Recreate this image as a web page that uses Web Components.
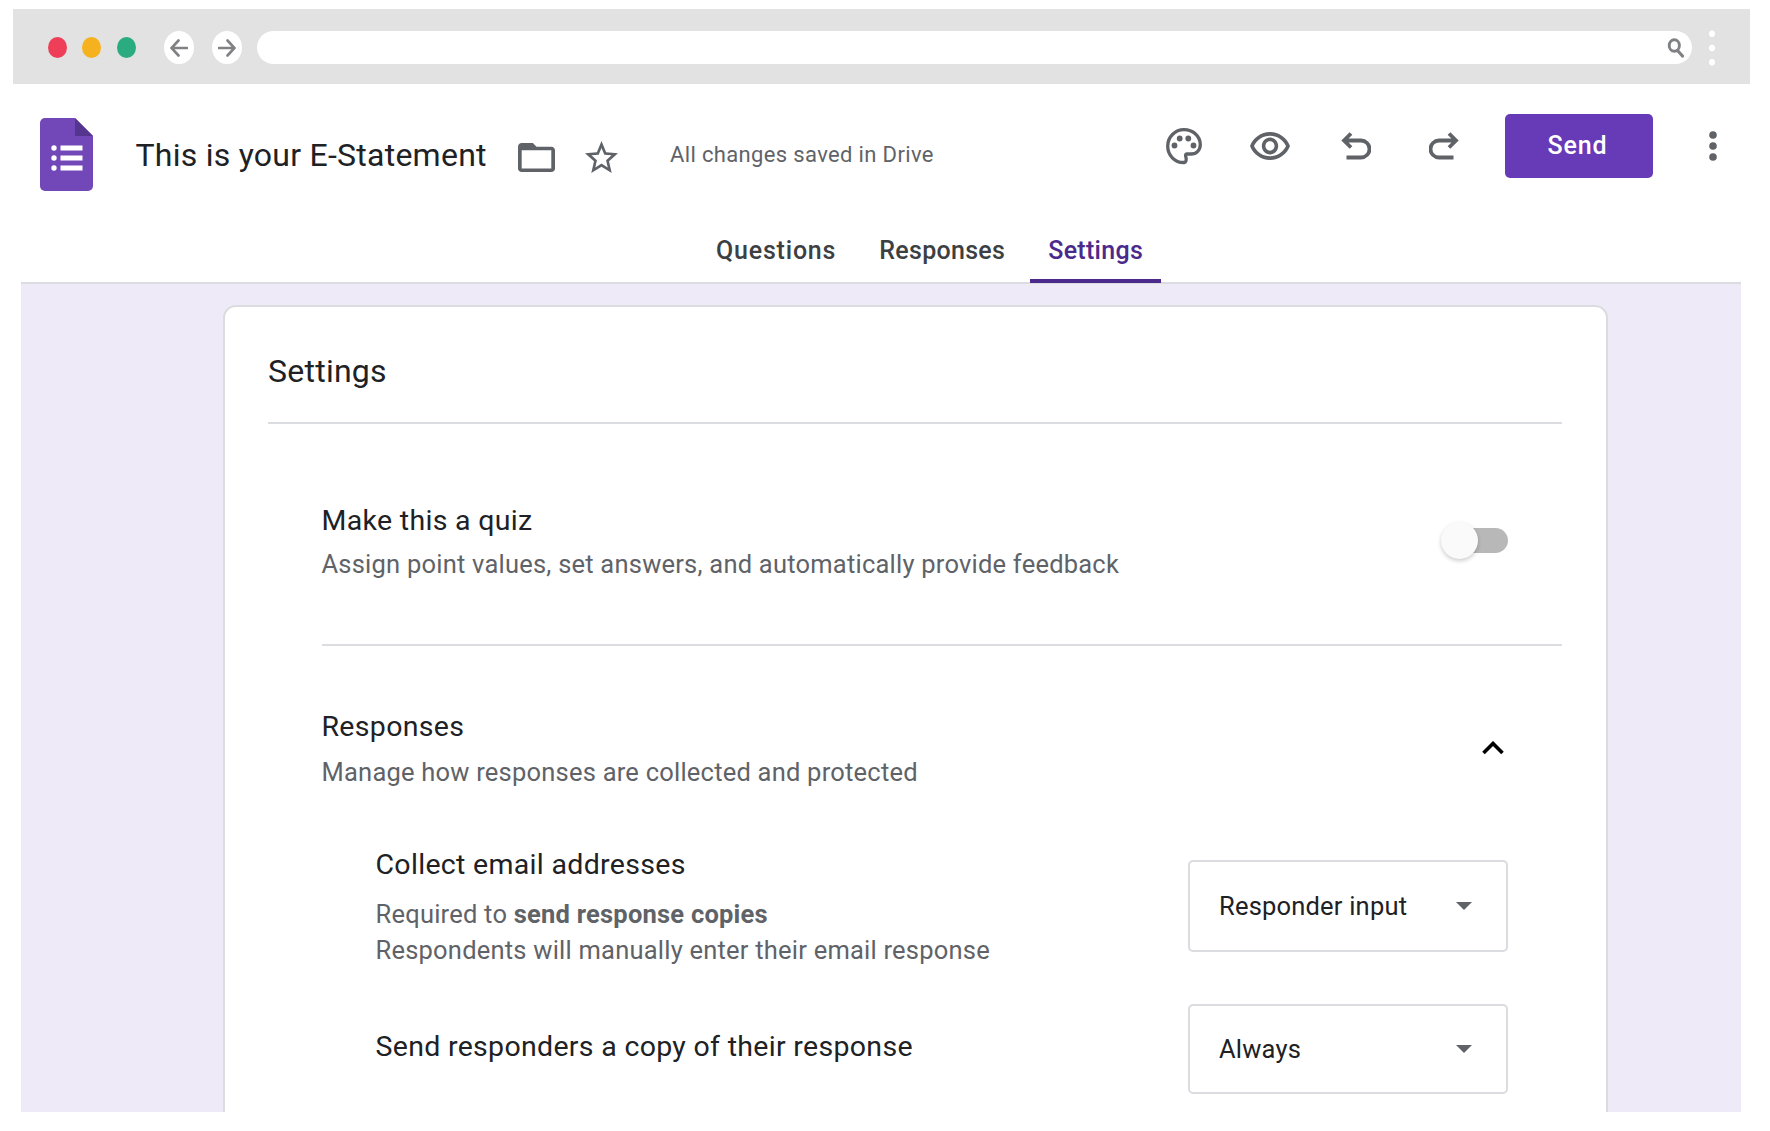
<!DOCTYPE html>
<html lang="en">
<head>
<meta charset="utf-8">
<title>This is your E-Statement</title>
<style>
  body {
    margin: 0;
    background: #fff;
    font-family: Roboto, "Liberation Sans", sans-serif;
    color: #202124;
  }
</style>
</head>
<body>
<form-editor></form-editor>

<script>
const icons = {
  back: { box: '0 0 18 18', path: '<path d="M17 9H2M8.500 1.500L1.500 9l7 7.500" fill="none" stroke="currentColor" stroke-width="2.600" stroke-linecap="round"/>' },
  forward: { box: '0 0 18 18', path: '<path d="M1 9h15M9.500 1.500l7 7.500-7 7.500" fill="none" stroke="currentColor" stroke-width="2.600" stroke-linecap="round"/>' },
  search: { box: '0 0 18 20', path: '<ellipse cx="7.300" cy="7.500" rx="5.100" ry="5.800" fill="none" stroke="currentColor" stroke-width="2.900"/><path d="M10.500 12.500l5 5.500" stroke="currentColor" stroke-width="3.200" stroke-linecap="round"/>' },
  dots: { box: '0 0 8 36', path: '<g fill="currentColor"><ellipse cx="4" cy="3.700" rx="3" ry="3.200"/><ellipse cx="4" cy="18" rx="3" ry="3.200"/><ellipse cx="4" cy="32.300" rx="3" ry="3.200"/></g>' },
  logo: { box: '0 0 53 73', path: '<path d="M5 0h30l18 18v50a5 5 0 0 1-5 5H5a5 5 0 0 1-5-5V5a5 5 0 0 1 5-5z" fill="#7248b9"/><path d="M35 0l18 18H35z" fill="#563590"/><g fill="#fff"><path d="M20.500 27.500h22v5h-22zM20.500 37.500h22v5h-22zM20.500 47.500h22v5h-22z"/><circle cx="14" cy="30" r="2.700"/><circle cx="14" cy="40" r="2.700"/><circle cx="14" cy="50" r="2.700"/></g>' },
  folder: { box: '2 4 20 16', path: '<path d="M20 6h-8l-2-2H4c-1.100 0-2 .9-2 2v12c0 1.100.9 2 2 2h16c1.100 0 2-.9 2-2V8c0-1.100-.9-2-2-2zm0 12H4V8h16v10z" fill="currentColor"/>' },
  star: { box: '2 2 20 19', path: '<path d="M22 9.240l-7.190-.62L12 2 9.190 8.630 2 9.240l5.460 4.730L5.820 21 12 17.270 18.180 21l-1.630-7.030L22 9.240zM12 15.400l-3.760 2.270 1-4.280-3.320-2.880 4.380-.38L12 6.100l1.710 4.040 4.380.38-3.320 2.880 1 4.280L12 15.400z" fill="currentColor"/>' },
  palette: { box: '0 0 36 37', path: '<path d="M18.500 34.500C8.500 35 1.700 27 1.700 18S9 1.700 18 1.700 34.300 8 34.300 16.500C34.300 22 30.500 26 25 26h-4c-1.800 0-1.500 2-1 3.500.8 3-.5 5-1.500 5z" fill="none" stroke="currentColor" stroke-width="3.300"/><g fill="currentColor"><circle cx="8.500" cy="17.500" r="2.900"/><circle cx="13.700" cy="10.500" r="2.900"/><circle cx="22.300" cy="10.500" r="2.900"/><circle cx="27.500" cy="17.500" r="2.900"/></g>' },
  eye: { box: '1 4 22 15', path: '<path d="M12 6c3.790 0 7.170 2.130 8.820 5.500C19.170 14.870 15.790 17 12 17s-7.170-2.130-8.820-5.500C4.830 8.130 8.210 6 12 6m0-2C7 4 2.730 7.110 1 11.500 2.730 15.890 7 19 12 19s9.270-3.110 11-7.500C21.270 7.110 17 4 12 4zm0 5c1.380 0 2.500 1.120 2.500 2.500S13.380 14 12 14s-2.500-1.120-2.500-2.500S10.620 9 12 9m0-2c-2.480 0-4.500 2.020-4.500 4.500S9.520 16 12 16s4.500-2.020 4.500-4.500S14.480 7 12 7z" fill="currentColor"/>' },
  undo: { box: '0 0 30 28', path: '<path d="M10 1.500L3 8.500l7 7M3 8.500h17a8.500 8.500 0 0 1 0 17H5.500" fill="none" stroke="currentColor" stroke-width="3.800"/>' },
  redo: { box: '0 0 30 28', path: '<path d="M20 1.500l7 7-7 7M27 8.500H10a8.500 8.500 0 0 0 0 17h14.500" fill="none" stroke="currentColor" stroke-width="3.800"/>' },
  more: { box: '0 0 8 30', path: '<g fill="currentColor"><circle cx="4" cy="4" r="3.800"/><circle cx="4" cy="15" r="3.800"/><circle cx="4" cy="26" r="3.800"/></g>' },
  chevron: { box: '0 0 22 14', path: '<path d="M1.500 12L11 2.500l9.500 9.500" fill="none" stroke="currentColor" stroke-width="3.600"/>' },
  arrow: { box: '0 0 16 8', path: '<path d="M0 0h16L8 8z" fill="currentColor"/>' },
};

class UiIcon extends HTMLElement {
  constructor() {
    super();
    this.attachShadow({ mode: 'open' });
  }

  connectedCallback() {
    const icon = icons[this.getAttribute('name')];
    const width = this.getAttribute('width');
    const height = this.getAttribute('height');
    this.shadowRoot.innerHTML = `
      <style>
        :host { display: block; flex: none; width: ${width}px; height: ${height}px; }
        svg { display: block; }
      </style>
      <svg width="${width}" height="${height}" viewBox="${icon.box}" preserveAspectRatio="none" aria-hidden="true">${icon.path}</svg>
    `;
  }
}

class BrowserBar extends HTMLElement {
  constructor() {
    super();
    this.attachShadow({ mode: 'open' });
    this.shadowRoot.innerHTML = `
      <style>
        :host {
          display: flex;
          align-items: center;
          box-sizing: border-box;
          height: 75px;
          margin: 0 20px 0 13px;
          padding: 2px 34.500px 0 34.500px;
          background: #e2e2e2;
          color: #808184;
        }
        .lights { display: flex; gap: 15.500px; margin-right: 28.500px; }
        .lights span { width: 19px; height: 21px; border-radius: 50%; }
        .red { background: #ee3e58; }
        .yellow { background: #f6b11f; }
        .green { background: #2aab80; }
        .nav {
          display: flex;
          align-items: center;
          justify-content: center;
          width: 30px;
          height: 33px;
          margin-right: 17.500px;
          border-radius: 50%;
          background: #fff;
        }
        .address {
          flex: 1;
          display: flex;
          align-items: center;
          justify-content: flex-end;
          box-sizing: border-box;
          height: 33px;
          margin: 0 15.500px 0 -2.500px;
          padding-right: 7px;
          border-radius: 16.500px;
          background: #fff;
        }
        .menu { color: #fff; }
      </style>
      <div class="lights"><span class="red"></span><span class="yellow"></span><span class="green"></span></div>
      <div class="nav"><ui-icon name="back" width="18" height="18"></ui-icon></div>
      <div class="nav"><ui-icon name="forward" width="18" height="18"></ui-icon></div>
      <div class="address"><ui-icon name="search" width="18" height="20"></ui-icon></div>
      <ui-icon class="menu" name="dots" width="8" height="36"></ui-icon>
    `;
  }
}

class FormHeader extends HTMLElement {
  constructor() {
    super();
    this.attachShadow({ mode: 'open' });
    this.shadowRoot.innerHTML = `
      <style>
        :host {
          display: flex;
          align-items: flex-start;
          box-sizing: border-box;
          height: 127px;
          padding: 30px 53.500px 0 40px;
          color: #5f6368;
          white-space: nowrap;
        }
        .logo { margin-top: 4px; }
        h1 {
          width: 382px;
          margin: 21px 0 0 42.500px;
          font-size: 32px;
          font-weight: 400;
          line-height: 40px;
          letter-spacing: .25px;
          color: #202124;
        }
        .folder { margin-top: 29px; }
        .star { margin: 26.500px 0 0 30px; }
        .saved { margin: 27px 0 0 52.500px; font-size: 22px; line-height: 28px; letter-spacing: .35px; }
        .actions { display: flex; align-items: center; height: 64px; margin-left: auto; }
        .undo { margin: 0 0 0 50.500px; }
        .redo { margin: 0 0 0 58.500px; }
        .send {
          width: 148px;
          height: 64px;
          margin: 0 56px 0 45.500px;
          padding: 0;
          border: 0;
          border-radius: 5px;
          background: #673ab7;
          color: #fff;
          font: 500 25px/64px Roboto, sans-serif;
          letter-spacing: .9px;
          text-indent: -2px;
        }
      </style>
      <ui-icon class="logo" name="logo" width="53" height="73"></ui-icon>
      <h1>This is your E-Statement</h1>
      <ui-icon class="folder" name="folder" width="37" height="29"></ui-icon>
      <ui-icon class="star" name="star" width="33" height="32"></ui-icon>
      <span class="saved">All changes saved in Drive</span>
      <div class="actions">
        <ui-icon name="palette" width="36" height="37"></ui-icon>
        <ui-icon style="margin-left:48.500px" name="eye" width="40" height="28"></ui-icon>
        <ui-icon class="undo" name="undo" width="30" height="28"></ui-icon>
        <ui-icon class="redo" name="redo" width="30" height="28"></ui-icon>
        <button class="send">Send</button>
        <ui-icon name="more" width="8" height="30"></ui-icon>
      </div>
    `;
  }
}

class FormTabs extends HTMLElement {
  constructor() {
    super();
    this.attachShadow({ mode: 'open' });
    this.shadowRoot.innerHTML = `
      <style>
        :host {
          display: flex;
          gap: 7px;
          box-sizing: border-box;
          height: 73px;
          margin: 0 29px 0 20.500px;
          padding-left: 677.500px;
          border-bottom: 2px solid #dadce0;
        }
        ::slotted(*) {
          box-sizing: border-box;
          height: 71.500px;
          padding: 22px 18px 0;
          font-size: 25px;
          font-weight: 500;
          line-height: 36px;
          letter-spacing: .3px;
          color: #3c4043;
          white-space: nowrap;
        }
        ::slotted([active]) {
          color: #4b2a8c;
          border-bottom: 4.500px solid #4b2a8c;
        }
      </style>
      <slot></slot>
    `;
  }
}

class SettingsCard extends HTMLElement {
  constructor() {
    super();
    this.attachShadow({ mode: 'open' });
    this.shadowRoot.innerHTML = `
      <style>
        :host {
          display: block;
          height: 828px;
          margin: 0 29px 0 20.500px;
          overflow: hidden;
          background: #eeeaf8;
        }
        section {
          box-sizing: border-box;
          width: 1384.500px;
          height: 830px;
          margin: 21px 0 0 202.500px;
          padding: 0 43.500px 0 43px;
          border: 2px solid #dadce0;
          border-radius: 13px;
          background: #fff;
        }
        h2 {
          box-sizing: border-box;
          height: 117px;
          margin: 0;
          padding-top: 42px;
          border-bottom: 2px solid #dadce0;
          font-size: 32px;
          font-weight: 400;
          line-height: 44px;
          letter-spacing: .25px;
        }
      </style>
      <section>
        <h2><slot name="heading"></slot></h2>
        <slot></slot>
      </section>
    `;
  }
}

class SettingRow extends HTMLElement {
  constructor() {
    super();
    this.attachShadow({ mode: 'open' });
    this.shadowRoot.innerHTML = `
      <style>
        :host {
          display: flex;
          justify-content: space-between;
          align-items: flex-start;
          box-sizing: border-box;
          white-space: nowrap;
        }
        .label { font-size: 28.500px; line-height: 36px; letter-spacing: .31px; }
        .note { font-size: 25.500px; line-height: 36px; letter-spacing: .22px; color: #5f6368; }
      </style>
      <div>
        <div class="label"><slot name="label"></slot></div>
        <div class="note"><slot></slot></div>
      </div>
      <slot name="control"></slot>
    `;
  }
}

class ToggleSwitch extends HTMLElement {
  constructor() {
    super();
    this.attachShadow({ mode: 'open' });
    this.shadowRoot.innerHTML = `
      <style>
        :host {
          display: flex;
          align-items: center;
          width: 62px;
          height: 25px;
          border-radius: 12.500px;
          background: #b8b8b8;
        }
        span {
          width: 37px;
          height: 37px;
          margin-left: -5px;
          border-radius: 50%;
          background: #fafafa;
          box-shadow: 0 2px 4px rgba(0, 0, 0, .2);
        }
      </style>
      <span></span>
    `;
  }
}

class SelectBox extends HTMLElement {
  constructor() {
    super();
    this.attachShadow({ mode: 'open' });
    this.shadowRoot.innerHTML = `
      <style>
        :host {
          display: flex;
          align-items: center;
          justify-content: space-between;
          box-sizing: border-box;
          width: 320px;
          padding: 0 34px 1px 29px;
          border: 2px solid #dadce0;
          border-radius: 5px;
          font-size: 25.500px;
          line-height: 36px;
          letter-spacing: .2px;
        }
        ui-icon { color: #5f6368; }
      </style>
      <slot></slot>
      <ui-icon name="arrow" width="16" height="8"></ui-icon>
    `;
  }
}

class FormEditor extends HTMLElement {
  constructor() {
    super();
    this.attachShadow({ mode: 'open' });
    this.shadowRoot.innerHTML = `
      <style>
        :host {
          display: block;
          box-sizing: border-box;
          width: 1770px;
          height: 1131px;
          padding-top: 9px;
          overflow: hidden;
        }
        .quiz { height: 222px; margin-left: 53.500px; padding: 79px 54px 0 0; border-bottom: 2px solid #dadce0; }
        .responses { height: 200px; margin-left: 53.500px; padding: 63px 58px 0 0; }
        .email { height: 158px; margin-left: 107.500px; padding: 1px 54px 0 0; }
        .copy { margin-left: 107.500px; padding: 0 54px 0 0; }
        .copy span { display: block; margin-top: 25px; }
        toggle-switch { margin-top: 25px; }
        .email select-box { height: 92px; margin-top: 13px; }
        .copy select-box { height: 90px; }
      </style>
      <browser-bar></browser-bar>
      <form-header></form-header>
      <form-tabs>
        <span style="letter-spacing:.8px">Questions</span>
        <span>Responses</span>
        <span active>Settings</span>
      </form-tabs>
      <settings-card>
        <span slot="heading">Settings</span>
        <setting-row class="quiz">
          <span slot="label">Make this a quiz</span>
          <div style="margin-top:7px">Assign point values, set answers, and automatically provide feedback</div>
          <toggle-switch slot="control"></toggle-switch>
        </setting-row>
        <setting-row class="responses">
          <span slot="label">Responses</span>
          <div style="margin-top:9px">Manage how responses are collected and protected</div>
          <ui-icon slot="control" style="margin-top:32px;color:#000" name="chevron" width="22" height="14"></ui-icon>
        </setting-row>
        <setting-row class="email">
          <span slot="label">Collect email addresses</span>
          <div style="margin-top:13px">Required to <b>send response copies</b><br>Respondents will manually enter their email response</div>
          <select-box slot="control">Responder input</select-box>
        </setting-row>
        <setting-row class="copy">
          <span slot="label">Send responders a copy of their response</span>
          <select-box slot="control">Always</select-box>
        </setting-row>
      </settings-card>
    `;
  }
}

customElements.define('ui-icon', UiIcon);
customElements.define('browser-bar', BrowserBar);
customElements.define('form-header', FormHeader);
customElements.define('form-tabs', FormTabs);
customElements.define('settings-card', SettingsCard);
customElements.define('setting-row', SettingRow);
customElements.define('toggle-switch', ToggleSwitch);
customElements.define('select-box', SelectBox);
customElements.define('form-editor', FormEditor);
</script>
</body>
</html>
